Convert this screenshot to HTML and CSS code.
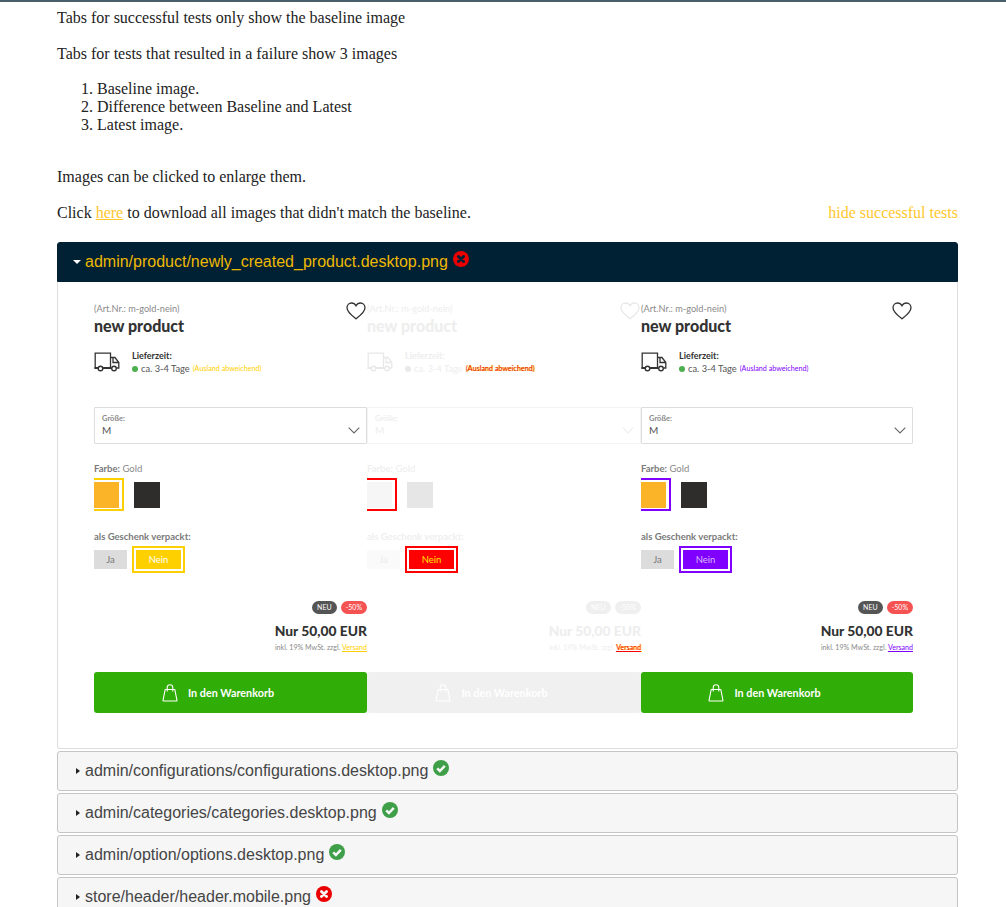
FILE: index.html
```html
<!DOCTYPE html>
<html lang="en">
<head>
  <meta charset="UTF-8">
  <meta name="viewport" content="width=device-width, initial-scale=1.0">
  <title>Visual Regression Report</title>
  <link rel="stylesheet" href="styles.css">
</head>
<body>
  <svg class="icon-defs" width="0" height="0" aria-hidden="true">
    <symbol id="i-fail" viewBox="0 0 16 16">
      <circle cx="8" cy="8" r="8" fill="currentColor"/>
      <path d="M5.400 5.400l5.200 5.200M10.600 5.400l-5.200 5.200" stroke="var(--glyph)" stroke-width="2.800" stroke-linecap="round" fill="none"/>
    </symbol>
    <symbol id="i-ok" viewBox="0 0 16 16">
      <circle cx="8" cy="8" r="8" fill="currentColor"/>
      <path d="M4.200 8.300l2.700 2.700 4.900-5.200" stroke="var(--glyph)" stroke-width="2.500" fill="none"/>
    </symbol>
    <symbol id="i-heart" viewBox="0 0 20 18">
      <path d="M10 16.800C6 13.600 1 10 1 5.700 1 3 3 1 5.500 1 7.400 1 9 2 10 3.800 11 2 12.600 1 14.500 1 17 1 19 3 19 5.700c0 4.300-5 7.900-9 11.100z" fill="none" stroke="currentColor" stroke-width="1.300"/>
    </symbol>
    <symbol id="i-truck" viewBox="0 0 26 20">
      <path d="M4 16H1.200V1.200H16.500V16H9M16.500 5.500H21L24.800 10.500V16H22.500M16.500 16H17.500M19 5.500V10.500H24.800" fill="none" stroke="currentColor" stroke-width="1.300"/>
      <path d="M.5 16H4M9 16H17" stroke="currentColor" stroke-width="2"/>
      <circle cx="6.500" cy="16.500" r="2.300" fill="none" stroke="currentColor" stroke-width="1.400"/>
      <circle cx="20" cy="16.500" r="2.300" fill="none" stroke="currentColor" stroke-width="1.400"/>
    </symbol>
    <symbol id="i-chev" viewBox="0 0 12 7">
      <path d="M.7.7L6 6 11.300.7" fill="none" stroke="currentColor" stroke-width="1.100"/>
    </symbol>
    <symbol id="i-bag" viewBox="0 0 16 18">
      <path d="M3.200 5.500H12.800L15 16.500Q15 17 14.500 17H1.500Q1 17 1 16.500ZM5.200 7.500V3.500A2.800 2.800 0 0 1 10.800 3.500V7.500" fill="none" stroke="currentColor" stroke-width="1.100"/>
    </symbol>
  </svg>

  <div class="topbar"></div>

  <main class="report">
    <p>Tabs for successful tests only show the baseline image</p>
    <p>Tabs for tests that resulted in a failure show 3 images</p>
    <ol class="steps">
      <li>Baseline image.</li>
      <li>Difference between Baseline and Latest</li>
      <li>Latest image.</li>
    </ol>
    <p>Images can be clicked to enlarge them.</p>
    <div class="actions">
      <p>Click <a href="#">here</a> to download all images that didn't match the baseline.</p>
      <a class="toggle" href="#">hide successful tests</a>
    </div>

    <section class="test open">
      <h3 class="test-head">
        <span class="caret"></span>
        <span class="test-name">admin/product/newly_created_product.desktop.png</span>
        <svg class="status fail"><use href="#i-fail"/></svg>
      </h3>
      <div class="test-body">
        <div class="shot baseline">
          <div class="top-row">
            <div class="art-nr">(Art.Nr.: m-gold-nein)</div>
            <svg class="heart"><use href="#i-heart"/></svg>
          </div>
          <div class="title">new product</div>
          <div class="delivery">
            <svg class="truck"><use href="#i-truck"/></svg>
            <div>
              <div class="del-label">Lieferzeit:</div>
              <div class="del-time"><span class="dot"></span>ca. 3-4 Tage <span class="abroad">(Ausland abweichend)</span></div>
            </div>
          </div>
          <div class="select">
            <div>
              <div class="sel-label">Größe:</div>
              <div class="sel-value">M</div>
            </div>
            <svg class="chev"><use href="#i-chev"/></svg>
          </div>
          <div class="opt-label"><b>Farbe:</b> Gold</div>
          <div class="swatches">
            <span class="swatch-sel"><span class="swatch gold"></span></span>
            <span class="swatch dark"></span>
          </div>
          <div class="opt-label gift"><b>als Geschenk verpackt:</b></div>
          <div class="gift-row">
            <span class="ja">Ja</span>
            <span class="nein-sel"><span class="nein">Nein</span></span>
          </div>
          <div class="badges"><span class="badge neu">NEU</span><span class="badge sale">-50%</span></div>
          <div class="price">Nur 50,00 EUR</div>
          <div class="tax">inkl. 19% MwSt. zzgl. <a href="#">Versand</a></div>
          <div class="cart"><svg class="bag"><use href="#i-bag"/></svg>In den Warenkorb</div>
        </div>

        <div class="shot diff">
          <div class="top-row">
            <div class="art-nr">(Art.Nr.: m-gold-nein)</div>
            <svg class="heart"><use href="#i-heart"/></svg>
          </div>
          <div class="title">new product</div>
          <div class="delivery">
            <svg class="truck"><use href="#i-truck"/></svg>
            <div>
              <div class="del-label">Lieferzeit:</div>
              <div class="del-time"><span class="dot"></span>ca. 3-4 Tage <span class="abroad">(Ausland abweichend)</span></div>
            </div>
          </div>
          <div class="select">
            <div>
              <div class="sel-label">Größe:</div>
              <div class="sel-value">M</div>
            </div>
            <svg class="chev"><use href="#i-chev"/></svg>
          </div>
          <div class="opt-label"><b>Farbe:</b> Gold</div>
          <div class="swatches">
            <span class="swatch-sel"><span class="swatch gold"></span></span>
            <span class="swatch dark"></span>
          </div>
          <div class="opt-label gift"><b>als Geschenk verpackt:</b></div>
          <div class="gift-row">
            <span class="ja">Ja</span>
            <span class="nein-sel"><span class="nein">Nein</span></span>
          </div>
          <div class="badges"><span class="badge neu">NEU</span><span class="badge sale">-50%</span></div>
          <div class="price">Nur 50,00 EUR</div>
          <div class="tax">inkl. 19% MwSt. zzgl. <a href="#">Versand</a></div>
          <div class="cart"><svg class="bag"><use href="#i-bag"/></svg>In den Warenkorb</div>
        </div>

        <div class="shot latest">
          <div class="top-row">
            <div class="art-nr">(Art.Nr.: m-gold-nein)</div>
            <svg class="heart"><use href="#i-heart"/></svg>
          </div>
          <div class="title">new product</div>
          <div class="delivery">
            <svg class="truck"><use href="#i-truck"/></svg>
            <div>
              <div class="del-label">Lieferzeit:</div>
              <div class="del-time"><span class="dot"></span>ca. 3-4 Tage <span class="abroad">(Ausland abweichend)</span></div>
            </div>
          </div>
          <div class="select">
            <div>
              <div class="sel-label">Größe:</div>
              <div class="sel-value">M</div>
            </div>
            <svg class="chev"><use href="#i-chev"/></svg>
          </div>
          <div class="opt-label"><b>Farbe:</b> Gold</div>
          <div class="swatches">
            <span class="swatch-sel"><span class="swatch gold"></span></span>
            <span class="swatch dark"></span>
          </div>
          <div class="opt-label gift"><b>als Geschenk verpackt:</b></div>
          <div class="gift-row">
            <span class="ja">Ja</span>
            <span class="nein-sel"><span class="nein">Nein</span></span>
          </div>
          <div class="badges"><span class="badge neu">NEU</span><span class="badge sale">-50%</span></div>
          <div class="price">Nur 50,00 EUR</div>
          <div class="tax">inkl. 19% MwSt. zzgl. <a href="#">Versand</a></div>
          <div class="cart"><svg class="bag"><use href="#i-bag"/></svg>In den Warenkorb</div>
        </div>
      </div>
    </section>

    <section class="test">
      <h3 class="test-head">
        <span class="caret"></span>
        <span class="test-name">admin/configurations/configurations.desktop.png</span>
        <svg class="status ok"><use href="#i-ok"/></svg>
      </h3>
    </section>
    <section class="test">
      <h3 class="test-head">
        <span class="caret"></span>
        <span class="test-name">admin/categories/categories.desktop.png</span>
        <svg class="status ok"><use href="#i-ok"/></svg>
      </h3>
    </section>
    <section class="test">
      <h3 class="test-head">
        <span class="caret"></span>
        <span class="test-name">admin/option/options.desktop.png</span>
        <svg class="status ok"><use href="#i-ok"/></svg>
      </h3>
    </section>
    <section class="test">
      <h3 class="test-head">
        <span class="caret"></span>
        <span class="test-name">store/header/header.mobile.png</span>
        <svg class="status fail"><use href="#i-fail"/></svg>
      </h3>
    </section>
  </main>
</body>
</html>
```

FILE: styles.css
```css
html, body {
  height: 907px;
  overflow: hidden;
}

body {
  margin: 0;
  font-family: "Liberation Serif", serif;
  font-size: 16px;
  color: #222;
  background: #fff;
}

.icon-defs {
  position: absolute;
}

.topbar {
  height: 2px;
  background: #4a5f6b;
}

.report {
  margin: 0 48px 0 57px;
  padding-top: 6px;
}

p {
  margin: 16px 0;
  line-height: 20px;
}

.report > p:first-child {
  margin-top: 0;
}

a {
  color: #ffc72c;
}

.steps {
  margin: 15px 0 33px;
  padding-left: 40px;
  line-height: 18px;
}

.actions {
  display: flex;
  justify-content: space-between;
  align-items: center;
  margin-bottom: 19px;
}

.actions p {
  margin: 0;
}

.toggle {
  text-decoration: none;
}

/* accordion */
.test {
  margin-bottom: 2px;
}

.test-head {
  --glyph: #f6f6f6;
  display: flex;
  align-items: center;
  height: 40px;
  box-sizing: border-box;
  margin: 0;
  padding-left: 18px;
  font-family: "Liberation Sans", sans-serif;
  font-size: 16px;
  font-weight: 400;
  color: #454545;
  background: #f6f6f6;
  border: 1px solid #c5c5c5;
  border-radius: 3px;
}

.open .test-head {
  --glyph: #002033;
  color: #eeb902;
  background: #002033;
  border-color: #002033;
  border-radius: 3px 3px 0 0;
}

.caret {
  width: 0;
  height: 0;
  margin-right: 5px;
  border-left: 4px solid #222;
  border-top: 3.500px solid transparent;
  border-bottom: 3.500px solid transparent;
}

.open .caret {
  border-left: 4px solid transparent;
  border-right: 4px solid transparent;
  border-top: 4px solid #fff;
  border-bottom: 0;
  margin-left: -3px;
  margin-right: 4px;
}

.status {
  width: 16px;
  height: 16px;
  margin: -6px 0 0 5px;
}

.status.fail {
  color: #ea0000;
}

.status.ok {
  color: #3e9f48;
}

.test-body {
  display: grid;
  grid-template-columns: 273px 274px 272px;
  padding: 20px 44px 35px 36px;
  border: 1px solid #ddd;
  border-top: 0;
  border-radius: 0 0 3px 3px;
}

/* the product shots, colours change per column */
.shot {
  --ink: #333;
  --muted: #8a8a8a;
  --strong-muted: #7a7a7a;
  --heart: #333;
  --line: #ddd;
  --accent: #ffd000;
  --accent-ink: #fff;
  --abroad: #ffd000;
  --gold: #fbb327;
  --dark: #2f2c2c;
  --ja: #dcdcdc;
  --ja-ink: #777;
  --neu: #555;
  --sale: #f55252;
  --badge-ink: #fff;
  --cart: #30ad06;
  --dot: #4caf50;
  font-family: "Lato", sans-serif;
  color: var(--ink);
}

.latest {
  --accent: #7f00ff;
  --accent-ink: #d9b8ff;
  --abroad: #7f00ff;
}

.diff {
  --ink: #eee;
  --muted: #eee;
  --strong-muted: #efefef;
  --heart: #e8e8e8;
  --line: #f4f4f4;
  --accent: #ff0000;
  --accent-ink: #ffe500;
  --abroad: #e80000;
  --gold: #f6f6f6;
  --dark: #e6e6e6;
  --ja: #fafafa;
  --ja-ink: #ececec;
  --neu: #efefef;
  --sale: #efefef;
  --cart: #f0f0f0;
  --dot: #e9e9e9;
}

.top-row {
  display: flex;
  justify-content: space-between;
  align-items: flex-start;
  height: 14px;
}

.art-nr {
  font-size: 9.200px;
  line-height: 13px;
  color: var(--muted);
}

.heart {
  width: 20px;
  height: 18px;
  margin-right: 1px;
  color: var(--heart);
}

.title {
  font-size: 16px;
  font-weight: 900;
  line-height: 20px;
}

.delivery {
  display: flex;
  align-items: center;
  gap: 12px;
  margin-top: 14px;
  height: 24px;
}

.truck {
  width: 26px;
  height: 20px;
  color: var(--ink);
}

.diff .truck {
  color: #e8e8e8;
}

.del-label {
  font-size: 9px;
  font-weight: 700;
  line-height: 13px;
}

.del-time {
  display: flex;
  align-items: center;
  gap: 3px;
  font-size: 9.300px;
  line-height: 13px;
  color: var(--ink);
  white-space: nowrap;
}

.baseline .del-time, .latest .del-time {
  color: #555;
}

.dot {
  width: 6px;
  height: 6px;
  border-radius: 50%;
  background: var(--dot);
}

.abroad {
  font-size: 7.200px;
  color: var(--abroad);
}

.diff .abroad, .diff .tax a {
  text-shadow: 1px 0 #ffe500;
}

.select {
  display: flex;
  justify-content: space-between;
  align-items: center;
  box-sizing: border-box;
  height: 37px;
  margin-top: 33px;
  padding: 0 6px 0 7px;
  border: 1px solid var(--line);
  border-radius: 1px;
}

.sel-label {
  margin-top: -1px;
  font-size: 7.500px;
  font-weight: 700;
  line-height: 11px;
  color: var(--muted);
}

.sel-value {
  font-size: 10px;
  line-height: 13px;
  color: var(--muted);
}

.baseline .sel-value, .latest .sel-value {
  color: #555;
}

.chev {
  width: 12px;
  height: 7px;
  margin-top: 10px;
  color: #666;
}

.diff .chev {
  color: #eee;
}

.opt-label {
  margin-top: 18px;
  font-size: 9.500px;
  line-height: 13px;
  color: var(--muted);
}

.opt-label b {
  color: var(--strong-muted);
}

.gift {
  margin-top: 19px;
}

.swatches {
  display: flex;
  align-items: center;
  margin-top: 3px;
  height: 33px;
}

.swatch-sel {
  display: flex;
  box-sizing: border-box;
  width: 30px;
  height: 33px;
  padding: 1px 1px 1px 0;
  border: 2px solid var(--accent);
  border-left: 0;
}

.swatch {
  display: block;
  width: 26px;
  height: 26px;
  margin: auto 0;
}

.swatch-sel .swatch {
  width: 25px;
}

.gold {
  background: var(--gold);
}

.dark {
  margin-left: 10px;
  background: var(--dark);
}

.gift-row {
  display: flex;
  align-items: center;
  gap: 5px;
  margin-top: 3px;
  height: 27px;
}

.ja {
  width: 33px;
  height: 19px;
  font-size: 9.500px;
  line-height: 19px;
  text-align: center;
  color: var(--ja-ink);
  background: var(--ja);
}

.nein-sel {
  box-sizing: border-box;
  height: 27px;
  padding: 2px;
  border: 2px solid var(--accent);
}

.nein {
  display: block;
  width: 45px;
  height: 19px;
  font-size: 9.500px;
  line-height: 19px;
  text-align: center;
  color: var(--accent-ink);
  background: var(--accent);
}

.badges {
  display: flex;
  justify-content: flex-end;
  gap: 4px;
  margin-top: 28px;
}

.badge {
  height: 13px;
  padding: 0 5px;
  font-size: 7px;
  line-height: 13px;
  color: var(--badge-ink);
  border-radius: 7px;
}

.neu {
  background: var(--neu);
}

.sale {
  background: var(--sale);
}

.price {
  margin-top: 8px;
  font-size: 13.800px;
  font-weight: 900;
  line-height: 18px;
  text-align: right;
}

.tax {
  margin-top: 2px;
  font-size: 7.100px;
  line-height: 12px;
  text-align: right;
  color: var(--muted);
}

.tax a {
  color: var(--accent);
}

.cart {
  display: flex;
  align-items: center;
  justify-content: center;
  gap: 10px;
  height: 41px;
  margin-top: 18px;
  padding-right: 25px;
  font-size: 10.800px;
  font-weight: 700;
  color: #fff;
  background: var(--cart);
  border-radius: 3px;
}

.bag {
  width: 16px;
  height: 18px;
}
```
